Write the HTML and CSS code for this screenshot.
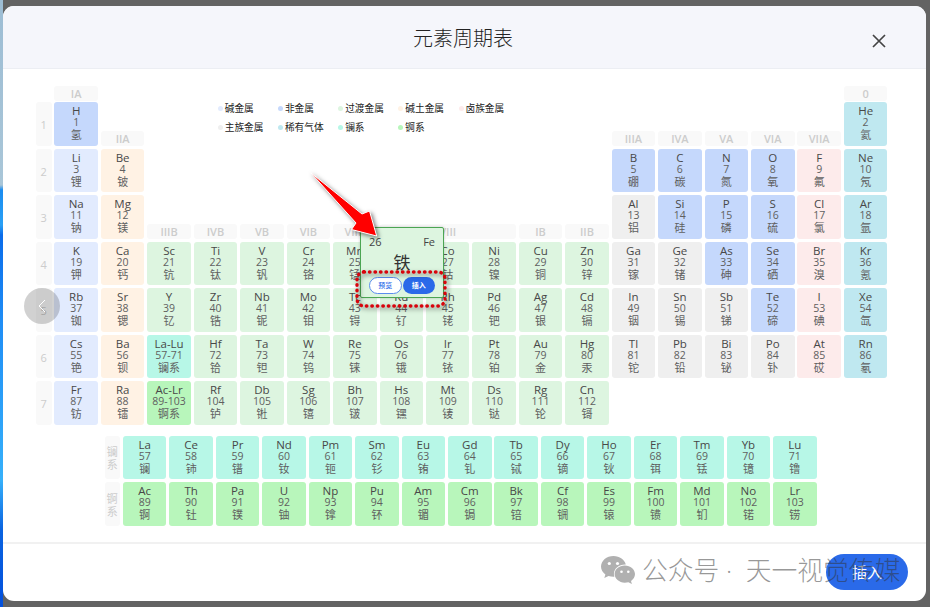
FILE: index.html
```html
<!DOCTYPE html>
<html lang="zh-CN">

<head>
    <meta charset="UTF-8">
    <meta name="viewport" content="width=device-width, initial-scale=1.0">
    <title>元素周期表</title>
    <link rel="stylesheet" href="styles.css">
</head>

<body>
    <div class="desktop"></div>
    <div class="dialog">
        <div class="header">
            <h1 class="title">元素周期表</h1>
            <svg class="close" viewBox="0 0 14 14"><path d="M1 1L13 13M13 1L1 13"/></svg>
        </div>
        <div class="content">
            <div class="table" id="table">
                <ul class="legend">
                    <li class="alkali">碱金属</li>
                    <li class="nonmetal">非金属</li>
                    <li class="transition">过渡金属</li>
                    <li class="earth">碱土金属</li>
                    <li class="halogen">卤族金属</li>
                    <li class="main">主族金属</li>
                    <li class="noble">稀有气体</li>
                    <li class="lan">镧系</li>
                    <li class="act">锕系</li>
                </ul>
            </div>
            <div class="series" id="series"></div>
        </div>
        <div class="footer">
            <button class="insert">插入</button>
        </div>
    </div>

    <div class="prev">
        <svg viewBox="0 0 8 14"><path d="M7 1L1 7L7 13"/></svg>
    </div>

    <div class="card">
        <div class="card-top"><span>26</span><span>Fe</span></div>
        <div class="card-name">铁</div>
        <div class="card-btns">
            <button class="view">预览</button>
            <button class="add">插入</button>
        </div>
    </div>
    <svg class="mark" viewBox="0 0 170 160">
        <path class="arrow" d="M10.500 12.500L62 54L69.500 51L76.700 76L51.500 69.500L56 63Z"/>
        <rect class="dots" x="57" y="112" width="88" height="34" rx="7"/>
    </svg>

    <div class="watermark">
        <svg viewBox="0 0 36 30">
            <path d="M13.500 1C6.500 1 1 5.700 1 11.500c0 3.200 1.700 6 4.400 8l-1.100 3.600 4.200-2.200c1.600.5 3.200.8 5 .8h.9c-.3-1-.5-1.800-.5-2.700 0-5.500 5.100-9.500 11.200-9.500h.7C24.700 4.700 19.700 1 13.500 1z"/>
            <path d="M24.800 10.500c-5.700 0-10.200 3.900-10.200 8.600s4.500 8.600 10.200 8.600c1.300 0 2.500-.2 3.600-.5l3.500 1.900-.9-3.100c2.400-1.600 4-4.100 4-6.900 0-4.700-4.600-8.600-10.200-8.600z"/>
            <g class="eye"><circle cx="9.300" cy="8.500" r="1.600"/><circle cx="17.500" cy="8.500" r="1.600"/><circle cx="21.500" cy="16.800" r="1.300"/><circle cx="28.300" cy="16.800" r="1.300"/></g>
        </svg>
        <span>公众号 ·&nbsp; 天一视觉传媒</span>
    </div>

    <script>
        var table = document.getElementById("table");
        var series = document.getElementById("series");

        // 每个周期: 起始列, 元素列表 (符号 序号 名称 类别)
        var periods = [
            [[1, "H 1 氢 nonmetal"], [18, "He 2 氦 noble"]],
            [[1, "Li 3 锂 alkali,Be 4 铍 earth"], [13, "B 5 硼 nonmetal,C 6 碳 nonmetal,N 7 氮 nonmetal,O 8 氧 nonmetal,F 9 氟 halogen,Ne 10 氖 noble"]],
            [[1, "Na 11 钠 alkali,Mg 12 镁 earth"], [13, "Al 13 铝 main,Si 14 硅 nonmetal,P 15 磷 nonmetal,S 16 硫 nonmetal,Cl 17 氯 halogen,Ar 18 氩 noble"]],
            [[1, "K 19 钾 alkali,Ca 20 钙 earth,Sc 21 钪 transition,Ti 22 钛 transition,V 23 钒 transition,Cr 24 铬 transition,Mn 25 锰 transition,Fe 26 铁 transition,Co 27 钴 transition,Ni 28 镍 transition,Cu 29 铜 transition,Zn 30 锌 transition,Ga 31 镓 main,Ge 32 锗 main,As 33 砷 nonmetal,Se 34 硒 nonmetal,Br 35 溴 halogen,Kr 36 氪 noble"]],
            [[1, "Rb 37 铷 alkali,Sr 38 锶 earth,Y 39 钇 transition,Zr 40 锆 transition,Nb 41 铌 transition,Mo 42 钼 transition,Tc 43 锝 transition,Ru 44 钌 transition,Rh 45 铑 transition,Pd 46 钯 transition,Ag 47 银 transition,Cd 48 镉 transition,In 49 铟 main,Sn 50 锡 main,Sb 51 锑 main,Te 52 碲 nonmetal,I 53 碘 halogen,Xe 54 氙 noble"]],
            [[1, "Cs 55 铯 alkali,Ba 56 钡 earth,La-Lu 57-71 镧系 lan,Hf 72 铪 transition,Ta 73 钽 transition,W 74 钨 transition,Re 75 铼 transition,Os 76 锇 transition,Ir 77 铱 transition,Pt 78 铂 transition,Au 79 金 transition,Hg 80 汞 transition,Tl 81 铊 main,Pb 82 铅 main,Bi 83 铋 main,Po 84 钋 main,At 85 砹 halogen,Rn 86 氡 noble"]],
            [[1, "Fr 87 钫 alkali,Ra 88 镭 earth,Ac-Lr 89-103 锕系 act,Rf 104 𬬻 transition,Db 105 𬭊 transition,Sg 106 𬭳 transition,Bh 107 𬭛 transition,Hs 108 𬭶 transition,Mt 109 鿏 transition,Ds 110 𫟼 transition,Rg 111 𬬭 transition,Cn 112 鿔 transition"]]
        ];
        // 族: 列, 所在行, 名称
        var groups = [[1, 0, "IA"], [2, 1, "IIA"], [3, 3, "IIIB"], [4, 3, "IVB"], [5, 3, "VB"], [6, 3, "VIB"], [7, 3, "VIIB"], [9, 3, "VIII"], [11, 3, "IB"], [12, 3, "IIB"], [13, 1, "IIIA"], [14, 1, "IVA"], [15, 1, "VA"], [16, 1, "VIA"], [17, 1, "VIIA"], [18, 0, "0"]];

        function add(parent, cls, html, col, row) {
            var el = document.createElement("div");
            el.className = cls;
            el.innerHTML = html;
            el.style.gridColumn = col;
            el.style.gridRow = row;
            parent.appendChild(el);
        }
        function addCells(parent, list, col, row) {
            list.split(",").forEach(function (item, i) {
                var e = item.split(" ");
                add(parent, "cell " + e[3], "<b>" + e[0] + "</b><i>" + e[1] + "</i><span>" + e[2] + "</span>", col + i, row);
            });
        }

        periods.forEach(function (parts, i) {
            add(table, "period", i + 1, 1, i + 2);
            parts.forEach(function (p) {
                addCells(table, p[1], p[0] + 1, i + 2);
            });
        });
        groups.forEach(function (g) {
            var wide = g[2] === "VIII";
            add(table, g[1] === 0 ? "group first" : "group", g[2], wide ? "9 / 12" : g[0] + 1, g[1] + 1);
        });

        add(series, "period", "镧系", 1, 1);
        addCells(series, "La 57 镧 lan,Ce 58 铈 lan,Pr 59 镨 lan,Nd 60 钕 lan,Pm 61 钷 lan,Sm 62 钐 lan,Eu 63 铕 lan,Gd 64 钆 lan,Tb 65 铽 lan,Dy 66 镝 lan,Ho 67 钬 lan,Er 68 铒 lan,Tm 69 铥 lan,Yb 70 镱 lan,Lu 71 镥 lan", 2, 1);
        add(series, "period", "锕系", 1, 2);
        addCells(series, "Ac 89 锕 act,Th 90 钍 act,Pa 91 镤 act,U 92 铀 act,Np 93 镎 act,Pu 94 钚 act,Am 95 镅 act,Cm 96 锔 act,Bk 97 锫 act,Cf 98 锎 act,Es 99 锿 act,Fm 100 镄 act,Md 101 钔 act,No 102 锘 act,Lr 103 铹 act", 2, 2);
    </script>
</body>

</html>
```
FILE: styles.css
```css
*{
    margin: 0;padding: 0;
    box-sizing: border-box;
}
body{
    display: flex;
    width: 930px;
    height: 607px;
    overflow: hidden;
    background: #636363;
    font-family: "Open Sans", "Noto Sans CJK SC", sans-serif;
    color: #444;
}
ul{
    list-style: none;
}
button{
    border: none;
    font-family: inherit;
}
.desktop{
    width: 3px;
    background: linear-gradient(#9dbdd4 0, #a9c6d8 185px, #1a8cf0 190px, #2aa0f5 225px, #0a6cea 235px, #1f8df5 320px, #36b0fa 480px, #0a63e0 530px, #0350dc 607px);
}
.dialog{
    width: 923px;
    height: 595px;
    margin-top: 6px;
    display: flex;
    flex-direction: column;
    background: #fff;
    border-radius: 11px;
    overflow: hidden;
}
.header{
    height: 63px;
    flex: none;
    display: flex;
    align-items: center;
    justify-content: space-between;
    padding: 3px 40px 0 410px;
    background: #f5f6fb;
    border-bottom: 1px solid #eceef3;
}
.title{
    font-size: 20px;
    font-weight: 300;
    line-height: 28px;
    color: #222;
}
.close{
    width: 14px;
    height: 14px;
    margin-top: 4px;
}
.close path{
    fill: none;
    stroke: #444;
    stroke-width: 1.7;
}
.content{
    height: 473px;
    flex: none;
    padding: 17px 0 0 33px;
}
.table{
    display: grid;
    grid-template-columns: 15.5px repeat(18, 43.5px);
    grid-template-rows: 13px repeat(7, 43.5px);
    gap: 3px 2.95px;
}
.legend{
    grid-column: 5 / 13;
    grid-row: 1 / 4;
    display: grid;
    grid-template-columns: repeat(5, 60.2px);
    grid-auto-rows: 19px;
    padding: 13px 0 0 24px;
}
.legend li{
    display: flex;
    align-items: center;
    gap: 2px;
    font-size: 9.7px;
    line-height: 19px;
    color: #222;
    white-space: nowrap;
}
.legend li::before{
    content: "";
    width: 5px;
    height: 5px;
    border-radius: 50%;
    background: var(--c);
}
.cell{
    display: flex;
    flex-direction: column;
    align-items: center;
    padding-top: 2px;
    border-radius: 3px;
    background: var(--c);
    color: #606060;
}
.cell b{
    font-size: 11.5px;
    font-weight: 400;
    line-height: 13px;
    color: #484848;
}
.cell i{
    font-size: 10.5px;
    font-style: normal;
    line-height: 10px;
}
.cell span{
    font-size: 11px;
    line-height: 16px;
}
.alkali{ --c: #e2ebfe; }
.nonmetal{ --c: #c5d8fc; }
.transition{ --c: #ddf5e0; }
.earth{ --c: #fff2e4; }
.halogen{ --c: #fdebeb; }
.main{ --c: #efefef; }
.noble{ --c: #bfe8f0; }
.lan{ --c: #b7f7e7; }
.act{ --c: #b8f6bb; }
.period,
.group{
    display: flex;
    align-items: center;
    justify-content: center;
    border-radius: 3px;
    background: #f9f9f9;
    font-size: 11px;
    line-height: 13px;
    color: #ccc;
    text-align: center;
}
.period{
    padding-top: 2px;
}
.group{
    align-self: end;
    height: 15px;
    font-weight: 600;
}
.first{
    margin-bottom: -2px;
}
.series{
    display: grid;
    grid-template-columns: 15.5px repeat(15, 43.5px);
    grid-template-rows: repeat(2, 43.5px);
    gap: 3px 2.95px;
    padding: 11px 0 0 68.5px;
}
.footer{
    flex: 1;
    display: flex;
    justify-content: flex-end;
    align-items: flex-start;
    padding: 10px 18px 0 0;
    border-top: 2px solid #f1f1f1;
}
.insert{
    width: 82px;
    height: 36px;
    padding-bottom: 2px;
    border-radius: 18px;
    background: #2a6ae9;
    color: #fff;
    font-size: 15px;
}
.prev{
    position: absolute;
    left: 24px;
    top: 288px;
    width: 36px;
    height: 36px;
    border-radius: 50%;
    background: rgba(0, 0, 0, .18);
    display: flex;
    align-items: center;
    justify-content: center;
}
.prev svg{
    width: 8px;
    height: 14px;
}
.prev path{
    fill: none;
    stroke: #fff;
}
.card{
    position: absolute;
    left: 360px;
    top: 227px;
    width: 84px;
    height: 71px;
    padding: 7px 8px 0;
    border: 1px solid #4ba553;
    border-radius: 2px;
    background: #ddf5e0;
    box-shadow: 0 0 3px rgba(0, 0, 0, .2);
}
.card-top{
    display: flex;
    justify-content: space-between;
    font-size: 11px;
    line-height: 14px;
}
.card-name{
    font-size: 17px;
    line-height: 28px;
    text-align: center;
    color: #333;
}
.card-btns{
    display: flex;
    gap: 1px;
}
.card-btns button{
    width: 33px;
    height: 17px;
    border-radius: 9px;
    font-size: 7px;
    line-height: 14px;
    font-weight: 500;
}
.card-btns .view{
    border: 1px solid #5b8cee;
    background: #fff;
    color: #2a6ae9;
}
.card-btns .add{
    background: #2a6ae9;
    color: #fff;
    font-weight: 700;
}
.mark{
    position: absolute;
    left: 300px;
    top: 160px;
    width: 170px;
    height: 160px;
    filter: drop-shadow(2px 2px 2px rgba(0, 0, 0, .5));
}
.arrow{
    fill: #f00;
    stroke: #fff;
    stroke-width: 1;
}
.dots{
    fill: none;
    stroke: #d8040c;
    stroke-width: 3.4;
    stroke-linecap: round;
    stroke-dasharray: .5 5;
}
.watermark{
    position: absolute;
    left: 600px;
    top: 554px;
    display: flex;
    align-items: center;
    gap: 6px;
    font-size: 25.8px;
    line-height: 32px;
    font-weight: 300;
    color: rgba(50, 50, 50, .5);
    white-space: nowrap;
}
.watermark svg{
    width: 36px;
    height: 30px;
    fill: #b0b0b0;
}
.watermark .eye{
    fill: #fff;
}
```
